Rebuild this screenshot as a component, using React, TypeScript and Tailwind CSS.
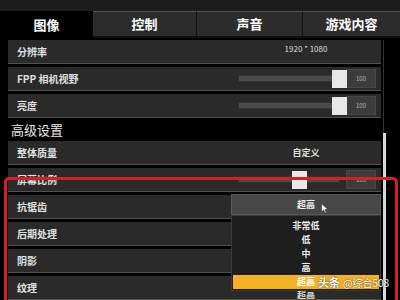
import React from "react";

const font = { fontFamily: '"Noto Sans CJK SC", "Noto Sans", sans-serif' };

function Row({ label, children }: { label: string; children?: React.ReactNode }) {
  return (
    <div className="h-[24px] bg-[#2a2a2a] border-b border-[#505050] flex items-center relative">
      <div className="pl-[9px] text-[10px] font-bold text-[#e0e0e0] w-[228px] leading-none">{label}</div>
      <div className="flex-1 flex items-center h-full">{children}</div>
    </div>
  );
}

function Slider({ pos }: { pos: number }) {
  return (
    <div className="flex items-center w-full h-full pr-[3px]">
      <div className="relative w-[102px] ml-[2px] h-[7px] bg-[#4a4a4a] border border-[#333]">
        <div className="absolute top-[-6px] w-[15px] h-[18px] bg-[#e8e8e8]" style={{ left: pos }} />
      </div>
      <div className="ml-[6px] w-[30px] h-[19px] bg-[#3c3c3c] border border-[#484848] flex items-center justify-center text-[6px] text-[#bbb]">100</div>
    </div>
  );
}

export default function App() {
  return (
    <div className="w-[400px] h-[300px] bg-black overflow-hidden relative" style={font}>
      <div className="h-[11px] bg-[#1c1c1c]" />
      <div className="h-[27px] flex">
        <div className="w-[93px] bg-black flex items-center justify-center text-white text-[13px] font-bold">图像</div>
        <div className="w-[104px] bg-[#2c2c2c] border-t border-[#555] border-r border-r-[#111] border-b-2 border-b-[#111] flex items-center justify-center text-white text-[13px] font-bold">控制</div>
        <div className="w-[106px] bg-[#2c2c2c] border-t border-[#555] border-r border-r-[#111] border-b-2 border-b-[#111] flex items-center justify-center text-white text-[13px] font-bold">声音</div>
        <div className="flex-1 bg-[#2c2c2c] border-t border-[#555] border-b-2 border-b-[#111] flex items-center justify-center text-white text-[13px] font-bold">游戏内容</div>
      </div>
      <div className="flex pt-[2px]">
        <div className="w-[8px]" />
        <div className="w-[373px] flex flex-col gap-[3px]">
          <Row label="分辨率">
            <div className="w-[150px] text-center text-[8px] text-[#ddd] -mt-[6px]">1920 * 1080</div>
          </Row>
          <Row label="FPP 相机视野"><Slider pos={93} /></Row>
          <Row label="亮度"><Slider pos={93} /></Row>
          <div className="h-[17px] flex items-center pl-[3px] text-[13px] text-[#e8e8e8] leading-none">高级设置</div>
          <Row label="整体质量">
            <div className="w-[150px] text-center text-[9px] text-[#ddd] font-bold">自定义</div>
          </Row>
          <Row label="屏幕比例"><Slider pos={53} /></Row>
          <Row label="抗锯齿" />
          <Row label="后期处理" />
          <Row label="阴影" />
          <Row label="纹理">
            <div className="w-[150px] text-center text-[9px] text-[#ddd] font-bold mt-[14px]">超高</div>
          </Row>
        </div>
        <div className="ml-[2px] w-[3px] flex flex-col">
          <div className="h-[93px] w-[1px] bg-[#333]" />
          <div className="w-[3px] h-[200px] bg-[#d8d8d8]" />
        </div>
      </div>

      {/* dropdown */}
      <div className="absolute left-[231px] top-[194px] w-[150px]">
        <div className="h-[21px] bg-[#474747] border border-[#5a5a5a] flex items-center justify-center text-[9px] font-bold text-[#eee]">超高</div>
        <div className="h-[76px] bg-[#1e1e1e] border border-[#3a3a3a] flex flex-col items-center pt-[3px] text-[9px] font-bold text-[#eee]">
          <div className="h-[14px] leading-[14px]">非常低</div>
          <div className="h-[14px] leading-[14px]">低</div>
          <div className="h-[14px] leading-[14px]">中</div>
          <div className="h-[14px] leading-[14px]">高</div>
          <div className="h-[14px] leading-[14px] w-[146px] bg-[#f4b222] text-center text-white">超高</div>
        </div>
      </div>

      {/* cursor */}
      <svg className="absolute left-[321px] top-[203px]" width="8" height="11" viewBox="0 0 8 11">
        <path d="M0.5 0.5 L0.5 9 L2.6 7 L4 10.3 L5.3 9.7 L4 6.6 L7 6.6 Z" fill="#eee" stroke="#333" strokeWidth="0.6" />
      </svg>

      {/* red highlight */}
      <div className="absolute left-[4px] top-[177px] w-[394px] h-[140px] border-[3px] border-[#d42020] rounded-[5px]" />

      {/* watermark */}
      <div className="absolute left-[318px] top-[277px] text-[10px] text-white leading-none flex items-center whitespace-nowrap" style={{ textShadow: "0 0 2px rgba(0,0,0,0.8)" }}>
        <span className="font-bold text-[11px]">头条</span>
        <span className="ml-[3px]">@综合508</span>
      </div>
    </div>
  );
}
